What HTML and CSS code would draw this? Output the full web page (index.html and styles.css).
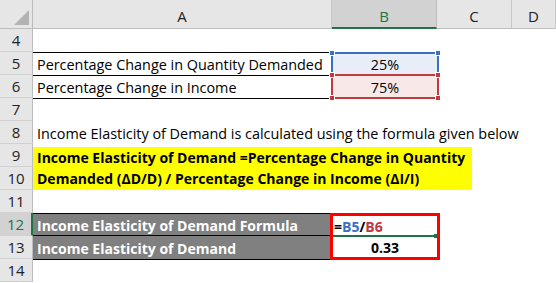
FILE: index.html
```html
<!DOCTYPE html>
<html>
<head>
<meta charset="utf-8">
<link rel="stylesheet" href="styles.css">
</head>
<body>
<div class="sheet">
  <div class="row hdr">
    <div class="corner"><svg width="17" height="17" viewBox="0 0 17 17"><polygon points="16,1 16,16 1,16" fill="#b3b3b3"/></svg></div>
    <div class="ch">A</div>
    <div class="ch sel">B</div>
    <div class="ch">C</div>
    <div class="ch">D</div>
  </div>
  <div class="row"><div class="rh">4</div><div class="c"></div><div class="c"></div><div class="c"></div><div class="c"></div></div>
  <div class="row"><div class="rh">5</div><div class="c txt bt bb">Percentage Change in Quantity Demanded</div><div class="c hl blue">25%<span class="hd tl"></span><span class="hd tr"></span></div><div class="c"></div><div class="c"></div></div>
  <div class="row"><div class="rh">6</div><div class="c txt bb">Percentage Change in Income</div><div class="c hl red">75%<span class="hd tl"></span><span class="hd tr"></span><span class="hd bl"></span><span class="hd br"></span></div><div class="c"></div><div class="c"></div></div>
  <div class="row"><div class="rh">7</div><div class="c"></div><div class="c"></div><div class="c"></div><div class="c"></div></div>
  <div class="row"><div class="rh">8</div><div class="c txt wide">Income Elasticity of Demand is calculated using the formula given below</div></div>
  <div class="block">
    <div class="rhs">
      <div class="rh">9</div>
      <div class="rh">10</div>
    </div>
    <div class="yellow">
      <div class="yl">Income Elasticity of Demand =Percentage Change in Quantity</div>
      <div class="yl">Demanded (ΔD/D) / Percentage Change in Income (ΔI/I)</div>
    </div>
  </div>
  <div class="row"><div class="rh">11</div><div class="c"></div><div class="c"></div><div class="c"></div><div class="c"></div></div>
  <div class="row"><div class="rh act">12</div><div class="c gray bt bb">Income Elasticity of Demand Formula</div><div class="c rbox rtop"><span class="f-eq">=</span><span class="f-b5">B5</span><span class="f-eq">/</span><span class="f-b6">B6</span><span class="active"></span></div><div class="c"></div><div class="c"></div></div>
  <div class="row"><div class="rh">13</div><div class="c gray bb">Income Elasticity of Demand</div><div class="c rbox rbot">0.33</div><div class="c"></div><div class="c"></div></div>
  <div class="row"><div class="rh">14</div><div class="c"></div><div class="c"></div><div class="c"></div><div class="c"></div></div>
</div>
</body>
</html>
```
FILE: styles.css
```css
html, body {
  margin: 0;
  padding: 0;
  background: #ffffff;
}
body {
  font-family: "Open Sans", "Noto Sans", sans-serif;
  font-size: 14.4px;
  color: #000;
  overflow: hidden;
}
.sheet {
  width: 556px;
}
.row {
  display: grid;
  grid-template-columns: 33px 299px 105px 75px 1fr;
  height: 23px;
}
.hdr {
  height: 29px;
  background: #e6e6e6;
}
.corner {
  box-sizing: border-box;
  border-right: 1px solid #bdbdbd;
  border-bottom: 1px solid #bdbdbd;
  display: flex;
  align-items: flex-end;
  justify-content: flex-end;
  padding: 0 2px 2px 0;
}
.ch {
  box-sizing: border-box;
  border-bottom: 1px solid #bdbdbd;
  border-right: 1px solid #c8c8c8;
  display: flex;
  align-items: center;
  justify-content: center;
  padding-top: 4px;
  font-size: 15px;
  color: #222;
}
.ch.sel {
  background: #d2d2d2;
  color: #217346;
  border-bottom: 2px solid #217346;
  border-right-color: #bdbdbd;
}
.rh {
  box-sizing: border-box;
  height: 23px;
  background: #e6e6e6;
  border-right: 1px solid #bdbdbd;
  border-bottom: 1px solid #d0d0d0;
  display: flex;
  align-items: center;
  justify-content: center;
  font-size: 15px;
  color: #222;
}
.rh.act {
  background: #d2d2d2;
  color: #217346;
  border-right: 2px solid #217346;
}
.c {
  box-sizing: border-box;
  position: relative;
  display: flex;
  align-items: center;
  white-space: nowrap;
  padding-top: 1px;
}
.txt {
  padding-left: 4px;
}
.wide {
  grid-column: 2 / 6;
}
.bt {
  border-top: 1px solid #000;
}
.bb {
  border-bottom: 1px solid #000;
}
.hl {
  justify-content: center;
  border: 2px solid;
  margin: 0 -2px 0 -1px;
}
.hl.blue {
  border-color: #3a6fc4;
  background: #e8eef8;
}
.hl.red {
  border-color: #c0393f;
  background: #f8e8e8;
  margin-top: -1px;
  height: 25px;
}
.hd {
  position: absolute;
  width: 4px;
  height: 4px;
  outline: 1px solid #fff;
}
.blue .hd { background: #3a6fc4; }
.red .hd { background: #c0393f; }
.hd.tl { top: -3px; left: -3px; }
.hd.tr { top: -3px; right: -3px; }
.hd.bl { bottom: -3px; left: -3px; }
.hd.br { bottom: -3px; right: -3px; }
.block {
  display: grid;
  grid-template-columns: 33px 1fr;
  height: 46px;
}
.rhs {
  display: flex;
  flex-direction: column;
}
.yellow {
  margin-top: 3px;
  width: 439px;
  height: 43px;
  background: #ffff00;
  font-size: 14px;
  font-weight: 700;
  display: flex;
  flex-direction: column;
}
.yl {
  height: 23px;
  padding-left: 4px;
  display: flex;
  align-items: center;
  white-space: nowrap;
}
.yl:first-child {
  height: 20px;
}
.gray {
  background: #808080;
  color: #fff;
  font-size: 14px;
  font-weight: 700;
  padding-left: 4px;
  border-color: #000;
}
.rbox {
  font-size: 14px;
  font-weight: 700;
  border-left: 3px solid #ff0000;
  border-right: 3px solid #ff0000;
  margin: 0 -3px 0 -2px;
}
.rtop {
  border-top: 3px solid #ff0000;
  padding-left: 1px;
}
.rbot {
  border-bottom: 3px solid #ff0000;
  height: 24px;
  justify-content: center;
  padding-top: 1px;
}
.f-eq { color: #000; }
.f-b5 { color: #3a6fc4; }
.f-b6 { color: #c0393f; }
.active {
  position: absolute;
  left: 0;
  right: 0;
  bottom: -1px;
  height: 2px;
  background: #217346;
}
.active::after {
  content: "";
  position: absolute;
  right: -1px;
  top: -1px;
  width: 4px;
  height: 4px;
  background: #217346;
}
```
